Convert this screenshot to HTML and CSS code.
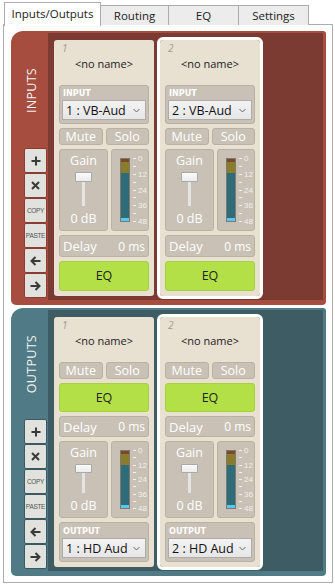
FILE: index.html
```html
<!DOCTYPE html>
<html lang="en">
<head>
    <meta charset="UTF-8">
    <meta name="viewport" content="width=device-width, initial-scale=1.0">
    <title>Inputs/Outputs</title>
    <link rel="stylesheet" href="styles.css">
</head>
<body>
    <div class="tabs">
        <div class="tab active">Inputs/Outputs</div>
        <div class="tab tab-routing">Routing</div>
        <div class="tab tab-eq">EQ</div>
        <div class="tab tab-settings">Settings</div>
    </div>

    <div class="panel">
        <!-- Inputs -->
        <div class="section inputs">
            <div class="strip">
                <div class="strip-title"><span>INPUTS</span></div>
                <div class="side-buttons">
                    <div class="side-btn"><svg width="10" height="10" viewBox="0 0 10 10"><path d="M5 0.5V9.5M0.5 5H9.5" stroke="#3a3a3a" stroke-width="2"/></svg></div>
                    <div class="side-btn"><svg width="9" height="9" viewBox="0 0 9 9"><path d="M1 1L8 8M8 1L1 8" stroke="#3a3a3a" stroke-width="2"/></svg></div>
                    <div class="side-btn small">COPY</div>
                    <div class="side-btn small">PASTE</div>
                    <div class="side-btn"><svg width="11" height="10" viewBox="0 0 11 10"><path d="M10.5 5H2M5.5 1L1.5 5L5.5 9" stroke="#3a3a3a" stroke-width="2" fill="none"/></svg></div>
                    <div class="side-btn"><svg width="11" height="10" viewBox="0 0 11 10"><path d="M0.5 5H9M5.5 1L9.5 5L5.5 9" stroke="#3a3a3a" stroke-width="2" fill="none"/></svg></div>
                </div>
            </div>
            <div class="channels">
                <div class="channel">
                    <div class="ch-head">
                        <div class="ch-num">1</div>
                        <div class="ch-name">&lt;no name&gt;</div>
                    </div>
                    <div class="ch-body">
                        <div class="group">
                            <div class="group-label">INPUT</div>
                            <div class="select"><span>1 : VB-Aud</span><svg width="7" height="5" viewBox="0 0 7 5"><path d="M0.5 1L3.5 4L6.5 1" stroke="#666" fill="none"/></svg></div>
                        </div>
                        <div class="row">
                            <div class="box btn">Mute</div>
                            <div class="box btn">Solo</div>
                        </div>
                        <div class="row gain-row">
                            <div class="box gain">
                                <div class="gain-label">Gain</div>
                                <div class="slider"><div class="thumb"></div><div class="track"></div></div>
                                <div class="gain-value">0 dB</div>
                            </div>
                            <div class="box meter">
                                <div class="bar"><div class="seg-clip"></div><div class="seg-warn"></div><div class="seg-level"></div><div class="seg-floor"></div></div>
                                <div class="scale">
                                    <div class="tick"><i></i>0</div>
                                    <div class="tick"><i></i></div>
                                    <div class="tick"><i></i>12</div>
                                    <div class="tick"><i></i></div>
                                    <div class="tick"><i></i>24</div>
                                    <div class="tick"><i></i></div>
                                    <div class="tick"><i></i>36</div>
                                    <div class="tick"><i></i></div>
                                    <div class="tick"><i></i>48</div>
                                </div>
                            </div>
                        </div>
                        <div class="box delay"><span>Delay</span><span>0 ms</span></div>
                        <div class="eq">EQ</div>
                    </div>
                </div>

                <div class="channel selected">
                    <div class="ch-head">
                        <div class="ch-num">2</div>
                        <div class="ch-name">&lt;no name&gt;</div>
                    </div>
                    <div class="ch-body">
                        <div class="group">
                            <div class="group-label">INPUT</div>
                            <div class="select"><span>2 : VB-Aud</span><svg width="7" height="5" viewBox="0 0 7 5"><path d="M0.5 1L3.5 4L6.5 1" stroke="#666" fill="none"/></svg></div>
                        </div>
                        <div class="row">
                            <div class="box btn">Mute</div>
                            <div class="box btn">Solo</div>
                        </div>
                        <div class="row gain-row">
                            <div class="box gain">
                                <div class="gain-label">Gain</div>
                                <div class="slider"><div class="thumb"></div><div class="track"></div></div>
                                <div class="gain-value">0 dB</div>
                            </div>
                            <div class="box meter">
                                <div class="bar"><div class="seg-clip"></div><div class="seg-warn"></div><div class="seg-level"></div><div class="seg-floor"></div></div>
                                <div class="scale">
                                    <div class="tick"><i></i>0</div>
                                    <div class="tick"><i></i></div>
                                    <div class="tick"><i></i>12</div>
                                    <div class="tick"><i></i></div>
                                    <div class="tick"><i></i>24</div>
                                    <div class="tick"><i></i></div>
                                    <div class="tick"><i></i>36</div>
                                    <div class="tick"><i></i></div>
                                    <div class="tick"><i></i>48</div>
                                </div>
                            </div>
                        </div>
                        <div class="box delay"><span>Delay</span><span>0 ms</span></div>
                        <div class="eq">EQ</div>
                    </div>
                </div>
            </div>
        </div>

        <!-- Outputs -->
        <div class="section outputs">
            <div class="strip">
                <div class="strip-title"><span>OUTPUTS</span></div>
                <div class="side-buttons">
                    <div class="side-btn"><svg width="10" height="10" viewBox="0 0 10 10"><path d="M5 0.5V9.5M0.5 5H9.5" stroke="#3a3a3a" stroke-width="2"/></svg></div>
                    <div class="side-btn"><svg width="9" height="9" viewBox="0 0 9 9"><path d="M1 1L8 8M8 1L1 8" stroke="#3a3a3a" stroke-width="2"/></svg></div>
                    <div class="side-btn small">COPY</div>
                    <div class="side-btn small">PASTE</div>
                    <div class="side-btn"><svg width="11" height="10" viewBox="0 0 11 10"><path d="M10.5 5H2M5.5 1L1.5 5L5.5 9" stroke="#3a3a3a" stroke-width="2" fill="none"/></svg></div>
                    <div class="side-btn"><svg width="11" height="10" viewBox="0 0 11 10"><path d="M0.5 5H9M5.5 1L9.5 5L5.5 9" stroke="#3a3a3a" stroke-width="2" fill="none"/></svg></div>
                </div>
            </div>
            <div class="channels">
                <div class="channel">
                    <div class="ch-head">
                        <div class="ch-num">1</div>
                        <div class="ch-name">&lt;no name&gt;</div>
                    </div>
                    <div class="ch-body">
                        <div class="row">
                            <div class="box btn">Mute</div>
                            <div class="box btn">Solo</div>
                        </div>
                        <div class="eq">EQ</div>
                        <div class="box delay"><span>Delay</span><span>0 ms</span></div>
                        <div class="row gain-row">
                            <div class="box gain">
                                <div class="gain-label">Gain</div>
                                <div class="slider"><div class="thumb"></div><div class="track"></div></div>
                                <div class="gain-value">0 dB</div>
                            </div>
                            <div class="box meter">
                                <div class="bar"><div class="seg-clip"></div><div class="seg-warn"></div><div class="seg-level"></div><div class="seg-floor"></div></div>
                                <div class="scale">
                                    <div class="tick"><i></i>0</div>
                                    <div class="tick"><i></i></div>
                                    <div class="tick"><i></i>12</div>
                                    <div class="tick"><i></i></div>
                                    <div class="tick"><i></i>24</div>
                                    <div class="tick"><i></i></div>
                                    <div class="tick"><i></i>36</div>
                                    <div class="tick"><i></i></div>
                                    <div class="tick"><i></i>48</div>
                                </div>
                            </div>
                        </div>
                        <div class="group">
                            <div class="group-label">OUTPUT</div>
                            <div class="select"><span>1 : HD Aud</span><svg width="7" height="5" viewBox="0 0 7 5"><path d="M0.5 1L3.5 4L6.5 1" stroke="#666" fill="none"/></svg></div>
                        </div>
                    </div>
                </div>

                <div class="channel selected">
                    <div class="ch-head">
                        <div class="ch-num">2</div>
                        <div class="ch-name">&lt;no name&gt;</div>
                    </div>
                    <div class="ch-body">
                        <div class="row">
                            <div class="box btn">Mute</div>
                            <div class="box btn">Solo</div>
                        </div>
                        <div class="eq">EQ</div>
                        <div class="box delay"><span>Delay</span><span>0 ms</span></div>
                        <div class="row gain-row">
                            <div class="box gain">
                                <div class="gain-label">Gain</div>
                                <div class="slider"><div class="thumb"></div><div class="track"></div></div>
                                <div class="gain-value">0 dB</div>
                            </div>
                            <div class="box meter">
                                <div class="bar"><div class="seg-clip"></div><div class="seg-warn"></div><div class="seg-level"></div><div class="seg-floor"></div></div>
                                <div class="scale">
                                    <div class="tick"><i></i>0</div>
                                    <div class="tick"><i></i></div>
                                    <div class="tick"><i></i>12</div>
                                    <div class="tick"><i></i></div>
                                    <div class="tick"><i></i>24</div>
                                    <div class="tick"><i></i></div>
                                    <div class="tick"><i></i>36</div>
                                    <div class="tick"><i></i></div>
                                    <div class="tick"><i></i>48</div>
                                </div>
                            </div>
                        </div>
                        <div class="group">
                            <div class="group-label">OUTPUT</div>
                            <div class="select"><span>2 : HD Aud</span><svg width="7" height="5" viewBox="0 0 7 5"><path d="M0.5 1L3.5 4L6.5 1" stroke="#666" fill="none"/></svg></div>
                        </div>
                    </div>
                </div>
            </div>
        </div>
    </div>
</body>
</html>
```

FILE: styles.css
```css
body {
    margin: 0;
    background-color: #fff;
    font-family: 'Open Sans', sans-serif;
    color: #222;
}

/* tabs */
.tabs {
    display: flex;
    align-items: flex-end;
    height: 25px;
    padding-left: 4px;
}

.tab {
    box-sizing: border-box;
    height: 20px;
    border: 1px solid #acacac;
    border-left: none;
    border-bottom: none;
    background-color: #ececec;
    font-size: 11.5px;
    line-height: 19px;
    text-align: center;
}

.tab.active {
    position: relative;
    z-index: 1;
    width: 97px;
    height: 24px;
    border-left: 1px solid #acacac;
    background-color: #fff;
    line-height: 22px;
    margin-bottom: -1px;
}

.tab-routing { width: 68px; }
.tab-eq { width: 70px; }
.tab-settings { width: 70px; }

/* panel */
.panel {
    box-sizing: border-box;
    width: 330px;
    margin-left: 3px;
    margin-top: -1px;
    border: 1px solid #acacac;
    padding: 6px 6px 6px 7px;
    display: flex;
    flex-direction: column;
    gap: 3px;
}

.section {
    display: flex;
    padding: 2px 3px 5px 0;
    border-radius: 12px 3px 4px 5px;
}

.inputs { background-color: #a64d40; }
.outputs { background-color: #507b86; }

.strip {
    width: 37px;
    display: flex;
    flex-direction: column;
    padding-bottom: 2px;
    box-sizing: border-box;
}

.strip-title {
    flex: 1;
    display: flex;
    align-items: center;
    justify-content: center;
    padding-left: 3px;
}

.strip-title span {
    writing-mode: vertical-rl;
    transform: rotate(180deg);
    color: #f4f0ee;
    font-size: 12.5px;
    letter-spacing: 0.3px;
}

.side-buttons {
    margin-left: 13px;
    width: 23px;
    display: flex;
    flex-direction: column;
}

.side-btn {
    box-sizing: border-box;
    height: 25px;
    display: flex;
    align-items: center;
    justify-content: center;
    background-color: #e1e1dd;
    border-radius: 2px;
    font-family: 'Liberation Sans', sans-serif;
}

.inputs .side-btn { border: 1px solid #8c3d33; }
.outputs .side-btn { border: 1px solid #3a5960; }

.side-btn.small {
    font-size: 6.5px;
    color: #555;
    letter-spacing: -0.3px;
}

.channels {
    flex: 1;
    display: flex;
    align-items: flex-start;
    padding: 4px 3px 1px;
}

.inputs .channels { background-color: #7b3a32; }
.outputs .channels { background-color: #3e5c64; }

/* channel card */
.channel {
    box-sizing: border-box;
    width: 106px;
    border: 3px solid transparent;
    border-radius: 6px;
    background-color: #e8e0d1;
    background-clip: padding-box;
    padding: 0 5px 5px;
}

.channel.selected {
    border-color: #fff;
}

.ch-head {
    height: 45px;
    padding-top: 2px;
    box-sizing: border-box;
}

.ch-num {
    font-size: 10px;
    font-style: italic;
    color: #a39c92;
    line-height: 12px;
    padding-left: 3px;
}

.ch-name {
    margin-top: 2px;
    font-size: 11px;
    line-height: 16px;
    text-align: center;
    color: #222;
}

.ch-body {
    display: flex;
    flex-direction: column;
    gap: 4px;
}

.row {
    display: flex;
    gap: 3px;
}

.box {
    box-sizing: border-box;
    background-color: #c9c1b5;
    border: 1px solid #b9b1a4;
    border-radius: 3px;
    color: #fff;
}

.btn {
    flex: 1;
    height: 17px;
    font-size: 12.5px;
    line-height: 15px;
    text-align: center;
}

.group {
    box-sizing: border-box;
    height: 39px;
    background-color: #c9c1b5;
    border: 1px solid #b9b1a4;
    border-radius: 3px;
    padding: 1px 2px 2px;
}

.outputs .group { height: 40px; }

.group-label {
    font-family: 'Liberation Sans Narrow', 'DejaVu Sans Condensed', sans-serif;
    font-weight: bold;
    font-size: 9px;
    line-height: 13px;
    color: #fff;
    padding-left: 1px;
}

.outputs .group-label { line-height: 14px; }

.select {
    box-sizing: border-box;
    height: 20px;
    display: flex;
    align-items: center;
    justify-content: space-between;
    padding: 0 5px 0 3px;
    background: linear-gradient(#f3f3f3, #e6e6e6);
    border: 1px solid #acacac;
    font-size: 12.5px;
    color: #111;
}

/* gain + meter */
.gain-row { height: 82px; }
.outputs .gain-row { height: 77px; }

.gain {
    flex: 0 0 49px;
    display: flex;
    flex-direction: column;
    align-items: center;
    padding: 3px 0 3px;
}

.gain-label,
.gain-value {
    font-size: 12.5px;
    line-height: 16px;
}

.slider {
    flex: 1;
    display: flex;
    flex-direction: column;
    align-items: center;
    margin: 3px 0 5px;
}

.thumb {
    box-sizing: border-box;
    width: 17px;
    height: 10px;
    background: linear-gradient(#fafafa, #ececec);
    border: 1px solid #a9a9a9;
    border-radius: 1px;
}

.outputs .thumb { height: 9px; }

.track {
    flex: 1;
    width: 3px;
    background-color: #e4e4e4;
}

.meter {
    flex: 1;
    display: flex;
    padding: 8px 0 8px 8px;
}

.bar {
    box-sizing: border-box;
    width: 10px;
    border: 1px solid #7d7a72;
    display: flex;
    flex-direction: column;
}

.seg-clip { height: 3px; background-color: #7a4925; }
.seg-warn { height: 11px; background-color: #8b7c2b; }
.seg-level { flex: 1; background-color: #2f6c79; }
.seg-floor { height: 3px; background-color: #56c9ef; }

.scale {
    display: flex;
    flex-direction: column;
    justify-content: space-between;
    margin: -3px 0 -3px 3px;
}

.tick {
    display: flex;
    align-items: center;
    height: 7px;
    font-family: 'Liberation Sans', sans-serif;
    font-size: 8px;
    color: #f2f0ec;
}

.tick i {
    width: 3px;
    height: 1px;
    background-color: #f2f0ec;
    margin-right: 2px;
}

.delay {
    height: 22px;
    display: flex;
    align-items: center;
    justify-content: space-between;
    padding: 0 3px 0 3px;
    font-size: 13px;
}

.outputs .delay { height: 21px; }

.delay span:last-child {
    font-size: 12px;
}

.eq {
    box-sizing: border-box;
    height: 30px;
    background-color: #b2e046;
    border: 1px solid #a6d23f;
    border-radius: 3px;
    font-size: 12.5px;
    line-height: 28px;
    text-align: center;
    color: #222;
}

.outputs .eq { height: 29px; line-height: 27px; }
```
